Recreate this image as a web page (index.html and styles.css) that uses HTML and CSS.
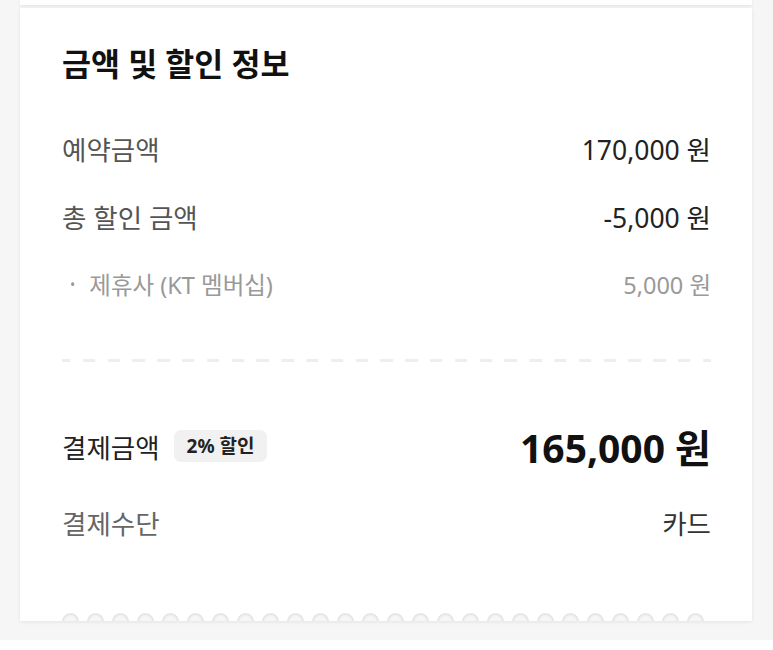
FILE: index.html
```html
<!DOCTYPE html>
<html lang="ko">
  <head>
    <meta charset="utf-8">
    <title>금액 및 할인 정보</title>
    <link rel="stylesheet" href="styles.css">
  </head>
  <body>
    <div class="page">
      <div class="prev-card"></div>
      <div class="card">
        <h2 class="card-title">금액 및 할인 정보</h2>
        <div class="row">
          <span class="label">예약금액</span>
          <span class="value">170,000 원</span>
        </div>
        <div class="row">
          <span class="label">총 할인 금액</span>
          <span class="value">-5,000 원</span>
        </div>
        <div class="row sub">
          <span class="label"><span class="dot">•</span>제휴사 (KT 멤버십)</span>
          <span class="value">5,000 원</span>
        </div>
        <div class="divider"></div>
        <div class="row total">
          <span class="label">결제금액 <span class="badge">2% 할인</span></span>
          <span class="value">165,000 원</span>
        </div>
        <div class="row method">
          <span class="label">결제수단</span>
          <span class="value">카드</span>
        </div>
        <div class="scallops"></div>
      </div>
    </div>
  </body>
</html>
```

FILE: styles.css
```css
body {
  margin: 0;
  background: #fff;
  font-family: "Noto Sans", "Noto Sans CJK KR", sans-serif;
  color: #222;
}
.page {
  background: #f6f6f6;
  padding: 0 21px 19px 20px;
}
.prev-card {
  height: 5px;
  background: #fff;
  box-shadow: 0 1px 3px rgba(0, 0, 0, 0.08);
}
.card {
  margin-top: 3px;
  background: #fff;
  padding: 36px 41px 0 42px;
  box-shadow: 0 1px 4px rgba(0, 0, 0, 0.08);
}
.card-title {
  margin: 0 0 40px;
  font-size: 31.5px;
  line-height: 40px;
  font-weight: 700;
  color: #111;
}
.row {
  display: flex;
  justify-content: space-between;
  align-items: center;
  height: 48px;
  margin-bottom: 20px;
  font-size: 26.5px;
}
.row .label {
  color: #555;
  display: flex;
  align-items: center;
}
.row .value {
  color: #222;
}
.row.sub {
  font-size: 23.5px;
  margin-bottom: 51px;
}
.row.sub .label,
.row.sub .value {
  color: #999;
}
.dot {
  font-size: 14px;
  margin: 0 14px 0 8px;
}
.divider {
  height: 3px;
  background: repeating-linear-gradient(90deg, #eee 0 12.4px, transparent 12.4px 24.8px);
  background-position: -3.8px 0;
  margin-bottom: 60px;
}
.row.total {
  margin-bottom: 28px;
}
.row.total .label {
  color: #222;
}
.badge {
  margin-left: 14px;
  padding: 0 13px;
  height: 32px;
  line-height: 32px;
  border-radius: 7px;
  background: #f1f1f1;
  font-size: 19px;
  font-weight: 700;
  color: #222;
}
.row.total .value {
  font-size: 39px;
  font-weight: 700;
  color: #111;
}
.row.method {
  margin-bottom: 67px;
}
.row.method .label {
  color: #666;
}
.row.method .value {
  color: #333;
}
.scallops {
  height: 8px;
  width: 650px;
  margin-left: -4.5px;
  background: radial-gradient(circle at 12.5px 8.5px, #f6f6f6 0 5px, #e3e3e3 7.8px, #fff 8.8px) repeat-x;
  background-size: 25px 8px;
}
```
